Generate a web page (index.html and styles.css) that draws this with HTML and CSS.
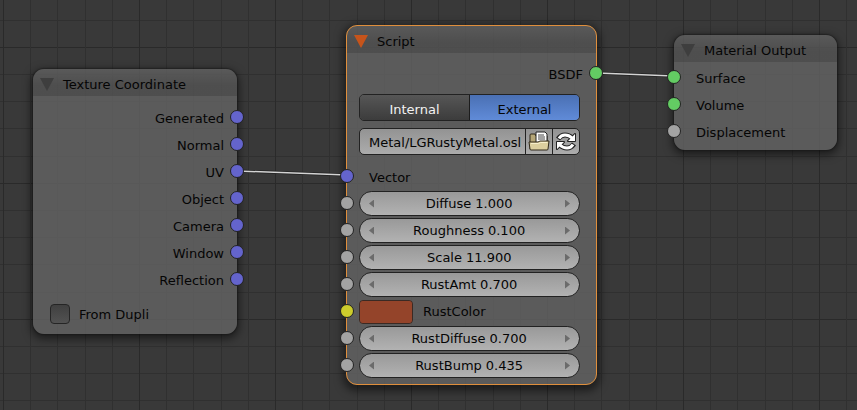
FILE: index.html
```html
<!DOCTYPE html>
<html lang="en">
<head>
<meta charset="utf-8">
<title>Node Editor</title>
<link rel="stylesheet" href="styles.css">
</head>
<body>
<main class="canvas">
  <svg class="links" aria-hidden="true">
    <g class="link-shadow"><line x1="237" y1="171" x2="347" y2="175"/><line x1="597" y1="73" x2="674" y2="76"/></g>
    <g class="link"><line x1="237" y1="171" x2="347" y2="175"/><line x1="597" y1="73" x2="674" y2="76"/></g>
  </svg>

  <section class="node node-texture">
    <h2 class="head"><svg class="fold" viewBox="0 0 14 13" aria-hidden="true"><path d="M0 0H14L7 13Z"/></svg>Texture Coordinate</h2>
    <ul class="outputs">
      <li class="row out">Generated<i class="socket vector"></i></li>
      <li class="row out">Normal<i class="socket vector"></i></li>
      <li class="row out">UV<i class="socket vector"></i></li>
      <li class="row out">Object<i class="socket vector"></i></li>
      <li class="row out">Camera<i class="socket vector"></i></li>
      <li class="row out">Window<i class="socket vector"></i></li>
      <li class="row out">Reflection<i class="socket vector"></i></li>
    </ul>
    <label class="check"><input type="checkbox">From Dupli</label>
  </section>

  <section class="node node-script selected">
    <h2 class="head"><svg class="fold" viewBox="0 0 14 13" aria-hidden="true"><path d="M0 0H14L7 13Z"/></svg>Script</h2>
    <div class="row out first">BSDF<i class="socket shader"></i></div>
    <div class="controls">
      <div class="mode">
        <button type="button" aria-pressed="false">Internal</button>
        <button type="button" aria-pressed="true">External</button>
      </div>
      <div class="file">
        <input type="text" aria-label="Script file" value="Metal/LGRustyMetal.osl">
        <button type="button" aria-label="Open file">
          <svg viewBox="0 0 24 22" width="24" height="22" aria-hidden="true">
            <path d="M3 18V4Q3 3 4 3H8L9 5H20V18Z" fill="#b5a677" stroke="#30291a"/>
            <path d="M9 1H18L20 3V12H9Z" fill="#fff" stroke="#222"/>
            <path d="M11 4H17M11 6H18M11 8H18" stroke="#444" fill="none"/>
            <path d="M2 11H11L13 10H22L21 18Q21 19 20 19H4Q3 19 3 18Z" fill="#dccf9f" stroke="#30291a"/>
            <path d="M4 12.500H11.500L13.500 11.500H20.500" stroke="#f7efcb" fill="none"/>
          </svg>
        </button>
        <button type="button" aria-label="Reload">
          <svg viewBox="0 0 24 22" width="24" height="22" aria-hidden="true">
            <g fill="none" stroke="#222" stroke-width="5"><path d="M4 8Q7 4 11 4Q15 4 18 7"/><path d="M20 13Q17 17 13 17Q9 17 6 14"/></g>
            <path d="M21 3V10H14Z M3 18V11H10Z" fill="#fff" stroke="#222" stroke-width="2" stroke-linejoin="round"/>
            <g fill="none" stroke="#fff" stroke-width="3"><path d="M5 7.500Q7 4 11 4Q15 4 18 7"/><path d="M19 13.500Q17 17 13 17Q9 17 6 14"/></g>
            <path d="M21 3V10H14Z M3 18V11H10Z" fill="#fff"/>
          </svg>
        </button>
      </div>
    </div>
    <div class="row in">Vector<i class="socket vector"></i></div>
    <div class="row field"><i class="socket value"></i><div class="slider"><button type="button" class="prev" aria-label="Decrease Diffuse"></button><label for="diffuse">Diffuse</label><input id="diffuse" type="text" value="1.000"><button type="button" class="next" aria-label="Increase Diffuse"></button></div></div>
    <div class="row field"><i class="socket value"></i><div class="slider"><button type="button" class="prev" aria-label="Decrease Roughness"></button><label for="roughness">Roughness</label><input id="roughness" type="text" value="0.100"><button type="button" class="next" aria-label="Increase Roughness"></button></div></div>
    <div class="row field"><i class="socket value"></i><div class="slider"><button type="button" class="prev" aria-label="Decrease Scale"></button><label for="scale">Scale</label><input id="scale" class="wide" type="text" value="11.900"><button type="button" class="next" aria-label="Increase Scale"></button></div></div>
    <div class="row field"><i class="socket value"></i><div class="slider"><button type="button" class="prev" aria-label="Decrease RustAmt"></button><label for="amt">RustAmt</label><input id="amt" type="text" value="0.700"><button type="button" class="next" aria-label="Increase RustAmt"></button></div></div>
    <div class="row field"><i class="socket color"></i><input class="swatch" id="rustcolor" type="color" value="#94442a"><label for="rustcolor">RustColor</label></div>
    <div class="row field"><i class="socket value"></i><div class="slider"><button type="button" class="prev" aria-label="Decrease RustDiffuse"></button><label for="rdiffuse">RustDiffuse</label><input id="rdiffuse" type="text" value="0.700"><button type="button" class="next" aria-label="Increase RustDiffuse"></button></div></div>
    <div class="row field"><i class="socket value"></i><div class="slider"><button type="button" class="prev" aria-label="Decrease RustBump"></button><label for="bump">RustBump</label><input id="bump" type="text" value="0.435"><button type="button" class="next" aria-label="Increase RustBump"></button></div></div>
  </section>

  <section class="node node-output">
    <h2 class="head"><svg class="fold" viewBox="0 0 14 13" aria-hidden="true"><path d="M0 0H14L7 13Z"/></svg>Material Output</h2>
    <ul class="inputs">
      <li class="row in">Surface<i class="socket shader"></i></li>
      <li class="row in">Volume<i class="socket shader"></i></li>
      <li class="row in">Displacement<i class="socket value"></i></li>
    </ul>
  </section>
</main>
</body>
</html>
```
FILE: styles.css
```css
* { box-sizing: border-box; }

body {
  margin: 0;
  color: #050505;
  font: 13px/27px "DejaVu Sans", sans-serif;
}

button, input { font: inherit; color: inherit; margin: 0; padding: 0; border: 0; background: none; }

/* Grid: one strong line every 136px, four faint ones between */
.canvas {
  --strong: #2a2a2a;
  --faint: #303030;
  position: relative;
  min-height: 100vh;
  overflow: hidden;
  background-color: #393939;
  background-image:
    linear-gradient(90deg, var(--strong) 1px, transparent 1px, transparent 27px, var(--faint) 27px, var(--faint) 28px, transparent 28px, transparent 54px, var(--faint) 54px, var(--faint) 55px, transparent 55px, transparent 82px, var(--faint) 82px, var(--faint) 83px, transparent 83px, transparent 109px, var(--faint) 109px, var(--faint) 110px, transparent 110px),
    linear-gradient(var(--strong) 1px, transparent 1px, transparent 27px, var(--faint) 27px, var(--faint) 28px, transparent 28px, transparent 54px, var(--faint) 54px, var(--faint) 55px, transparent 55px, transparent 81px, var(--faint) 81px, var(--faint) 82px, transparent 82px, transparent 109px, var(--faint) 109px, var(--faint) 110px, transparent 110px);
  background-size: 136px 136px;
  background-position: 3px 47px;
}

.links { position: absolute; inset: 0; width: 100%; height: 100%; z-index: 1; pointer-events: none; }
.link { stroke: #d4d4d4; stroke-width: 1.5; }
.link-shadow { stroke: #222; stroke-width: 3; }

.node {
  position: absolute;
  border-radius: 11px;
  background: rgba(99, 99, 99, .82);
  box-shadow: 0 0 1px 1px rgba(20, 20, 20, .45), 0 3px 8px 2px rgba(0, 0, 0, .5);
}
.node-texture { left: 33px; top: 69px; width: 204px; padding-bottom: 10px; }
.node-script { left: 346px; top: 25px; width: 251px; padding-bottom: 5px; }
.node-output { left: 674px; top: 35px; width: 163px; padding-bottom: 5px; }
.selected { border: 1px solid #e08f3c; box-shadow: 0 3px 8px 3px rgba(0, 0, 0, .5); }

.head {
  display: flex;
  align-items: center;
  gap: 9px;
  height: 27px;
  margin: 0;
  padding: 4px 7px 0;
  border-radius: 11px 11px 0 0;
  background: linear-gradient(rgba(0, 0, 0, .02), rgba(0, 0, 0, .14) 60%);
  font-size: 13px;
  font-weight: 400;
}
.fold { width: 14px; height: 13px; fill: #3e3e3e; }
.selected .fold { fill: #c6541b; }

ul { margin: 0; padding: 0; list-style: none; }
.outputs { padding-top: 8px; }
.inputs { padding-top: 2px; }

.row { position: relative; display: flex; align-items: center; height: 27px; }
.out { justify-content: flex-end; padding: 2px 13px 0 0; }
.in { padding: 2px 0 0 22px; }
.first { margin-top: 7px; }

.socket {
  position: absolute;
  z-index: 2;
  top: 6px;
  left: -7px;
  width: 14px;
  height: 14px;
  border: 1px solid #222;
  border-radius: 50%;
}
.out .socket { left: auto; right: -7px; }
.vector { background: #6464cc; }
.shader { background: #63cc63; }
.value { background: #a3a3a3; }
.color { background: #cccc2c; }

.check { display: flex; align-items: center; gap: 9px; height: 20px; margin: 11px 17px 0; }
.check input {
  appearance: none;
  width: 20px;
  height: 20px;
  border: 1px solid #252525;
  border-radius: 4px;
  background: linear-gradient(#404040, #525252);
}

.controls { display: grid; gap: 7px; padding: 7px 16px 8px 12px; }
.mode, .file {
  display: flex;
  height: 27px;
  border: 1px solid #222;
  border-radius: 5px;
  overflow: hidden;
  line-height: 25px;
}
.mode button { flex: 1; padding-top: 2px; background: linear-gradient(#565656, #3c3c3c); color: #f2f2f2; }
.mode button + button { border-left: 1px solid #1c1c1c; }
.mode button[aria-pressed="true"] { background: linear-gradient(#4a70b4, #608bd8); color: #050505; }
.file { background: linear-gradient(#939393, #acacac); }
.file input { flex: 1; min-width: 0; padding: 2px 0 0 9px; }
.file button { display: grid; place-items: center; width: 27px; border-left: 1px solid #222; }

.field { padding: 0 16px 0 12px; }
.slider {
  flex: 1;
  display: flex;
  align-items: center;
  justify-content: center;
  gap: 4px;
  height: 25px;
  padding: 0 9px;
  border: 1px solid #222;
  border-radius: 13px;
  background: linear-gradient(#999, #b2b2b2);
}
.slider input { width: 38px; }
.slider .wide { width: 46px; }
.prev, .next { width: 5px; height: 8px; background: #6b6b6b; }
.prev { margin-right: auto; clip-path: polygon(100% 0, 100% 100%, 0 50%); }
.next { margin-left: auto; clip-path: polygon(0 0, 100% 50%, 0 100%); }

.swatch {
  appearance: none;
  width: 54px;
  height: 24px;
  margin-right: 10px;
  border: 1px solid #3a2a24;
  border-radius: 4px;
  background: #94442a;
}
.swatch::-webkit-color-swatch-wrapper { padding: 0; }
.swatch::-webkit-color-swatch { border: 0; border-radius: 3px; }
```
